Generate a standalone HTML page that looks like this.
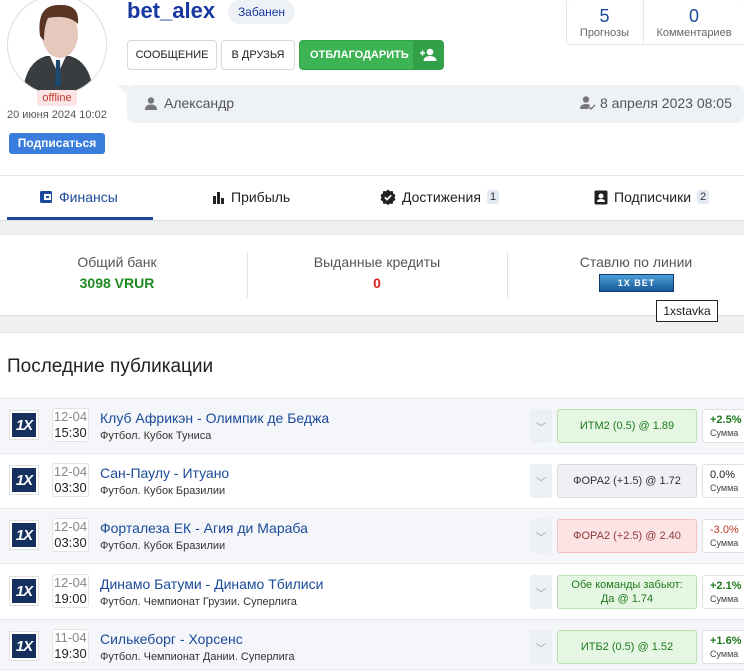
<!DOCTYPE html><html><head><meta charset="utf-8"><style>
*{box-sizing:border-box;margin:0;padding:0}
body{width:744px;height:666px;overflow:hidden;background:#fff;font-family:"Liberation Sans",Arial,sans-serif;position:relative;color:#222}
.a{position:absolute}
.btn{position:absolute;top:40px;height:30px;border:1px solid #d5d8dc;border-radius:4px;font-size:11px;display:flex;align-items:center;justify-content:center;background:#fff;color:#222}
.row{position:absolute;left:0;width:744px;height:55px;border-bottom:1px solid #e3e6ea}
.g{background:#f4f6f9}
.logo{position:absolute;left:9px;top:11px;width:30px;height:30px;border:1px solid #e0e0e0;background:#fff;padding:2px}
.logo div{width:100%;height:100%;background:#15305e;color:#fff;font-weight:bold;font-style:italic;font-size:15px;display:flex;align-items:center;justify-content:center;letter-spacing:-1px}
.dt{position:absolute;left:52px;top:9px;width:37px;height:34px;border:1px solid #e3e3e3;border-radius:3px;background:#fff;font-size:13px;text-align:center;line-height:16px;color:#222}
.dt span{color:#888;display:block}
.tt{position:absolute;left:100px;top:11px;font-size:14px;color:#1b4a9a}
.st{position:absolute;left:100px;top:31px;font-size:11px;color:#333}
.ch{position:absolute;left:530px;top:10px;width:22px;height:34px;background:#eceff3;border-radius:3px;color:#999;font-size:10px;display:flex;align-items:center;justify-content:center}
.bet{position:absolute;left:557px;top:10px;width:140px;height:34px;border:1px solid #ccc;border-radius:3px;font-size:11px;display:flex;align-items:center;justify-content:center;text-align:center;line-height:14px}
.gr{background:#e5f6e2;border-color:#b8e0b0;color:#1f7a1f}
.gy{background:#eef0f3;border-color:#d6d9dd;color:#333}
.rd{background:#fde4e4;border-color:#f3c1c1;color:#8a3b3b}
.pf{position:absolute;left:702px;top:10px;width:50px;height:34px;border:1px solid #e0e0e0;border-radius:3px;background:#fff;font-size:11px;padding:4px 0 0 7px;line-height:13px}
.pf small{font-size:9px;color:#444;display:block}
.tab{position:absolute;top:189px;font-size:14px;color:#222;display:flex;align-items:center;gap:6px}
.cnt{background:#e3e9f3;font-size:11px;padding:1px 3px;border-radius:3px;color:#333}
</style></head><body>
<div class="a" style="left:7px;top:-5px;width:100px;height:100px;border-radius:50%;border:1px solid #ddd;overflow:hidden;background:#fff">
<svg width="100" height="100" viewBox="0 0 100 100"><path d="M15 95 Q18 66 38 60 L62 60 Q82 66 85 95Z" fill="#3a3d3f"/><path d="M42 60 L50 78 L58 60Z" fill="#fff"/><path d="M48 64 L52 64 L53 90 L47 90Z" fill="#1d4a6e"/><ellipse cx="52" cy="38" rx="18" ry="24" fill="#e6c8bd"/><path d="M32 40 Q28 8 52 9 Q72 8 70 28 Q60 18 40 22 Q36 30 36 45Z" fill="#5a3524"/></svg></div>
<div class="a" style="left:37px;top:90px;width:40px;height:16px;background:#fde4e4;border-radius:3px;color:#c0392b;font-size:11px;text-align:center;line-height:16px">offline</div>
<div class="a" style="left:7px;top:109px;font-size:11px;color:#555">20 июня 2024 10:02</div>
<div class="a" style="left:9px;top:133px;width:96px;height:21px;background:#3b7ddd;border-radius:3px;color:#fff;font-size:12px;font-weight:bold;text-align:center;line-height:21px">Подписаться</div>
<div class="a" style="left:127px;top:-2px;font-size:22px;font-weight:bold;color:#1838a0">bet_alex</div>
<div class="a" style="left:228px;top:0;width:67px;height:24px;background:#eef1f5;border-radius:12px;font-size:12px;color:#1838a0;text-align:center;line-height:24px">Забанен</div>
<div class="btn" style="left:127px;width:90px">СООБЩЕНИЕ</div>
<div class="btn" style="left:221px;width:74px">В ДРУЗЬЯ</div>
<div class="btn" style="left:299px;width:145px;background:#3db454;border-color:#34a04a;color:#fff;font-weight:bold;justify-content:flex-start;padding-left:10px;overflow:hidden">ОТБЛАГОДАРИТЬ<div style="position:absolute;right:0;top:0;width:30px;height:100%;background:#31a047;display:flex;align-items:center;justify-content:center"><svg width="18" height="14" viewBox="0 0 18 14"><circle cx="11" cy="4" r="3.3" fill="#fff"/><path d="M4.5 13 Q5 8 11 8 Q17 8 17.5 13Z" fill="#fff"/><path d="M1 5h5M3.5 2.5v5" stroke="#fff" stroke-width="1.6"/></svg></div></div>
<div class="a" style="left:566px;top:-1px;width:180px;height:46px;border:1px solid #e3e6ea;border-radius:4px"></div>
<div class="a" style="left:643px;top:0;width:1px;height:45px;background:#e3e6ea"></div>
<div class="a" style="left:566px;top:5px;width:77px;text-align:center;font-size:18px;color:#1b4a9a;line-height:22px">5<div style="font-size:11px;color:#666;line-height:12px">Прогнозы</div></div>
<div class="a" style="left:644px;top:5px;width:100px;text-align:center;font-size:18px;color:#1b4a9a;line-height:22px">0<div style="font-size:11px;color:#666;line-height:12px">Комментариев</div></div>
<div class="a" style="left:127px;top:85px;width:617px;height:38px;background:#eef1f5;border-radius:8px"></div>
<div class="a" style="left:117px;top:85px;width:0;height:0;border-left:12px solid transparent;border-top:10px solid #eef1f5"></div>
<svg class="a" style="left:144px;top:97px" width="14" height="13" viewBox="0 0 14 13"><circle cx="7" cy="3.5" r="3.2" fill="#777"/><path d="M1 13 Q1 7.5 7 7.5 Q13 7.5 13 13Z" fill="#777"/></svg>
<div class="a" style="left:164px;top:95px;font-size:14px;color:#555">Александр</div>
<svg class="a" style="left:579px;top:96px" width="17" height="14" viewBox="0 0 17 14"><circle cx="7" cy="3.5" r="3.2" fill="#777"/><path d="M1 13 Q1 8 7 8 Q10 8 11 9 L9 13Z" fill="#777"/><path d="M10 11 l2 2 l4 -4" stroke="#777" stroke-width="1.4" fill="none"/></svg>
<div class="a" style="left:600px;top:95px;font-size:14px;color:#555">8 апреля 2023 08:05</div>
<div class="a" style="left:0;top:175px;width:744px;height:1px;background:#e3e6ea"></div>
<div class="tab" style="left:39px;color:#1b4a9a"><svg width="14" height="14" viewBox="0 0 14 14"><rect x="1" y="1" width="12" height="12" rx="1.5" fill="#1b4a9a"/><rect x="5" y="4" width="7" height="6" fill="#fff"/><rect x="7" y="6" width="3" height="2" fill="#1b4a9a"/></svg>Финансы</div>
<div class="a" style="left:7px;top:217px;width:146px;height:3px;background:#1b4a9a"></div>
<div class="tab" style="left:212px"><svg width="13" height="13" viewBox="0 0 13 13"><rect x="1" y="5" width="3" height="8" fill="#222"/><rect x="5" y="1" width="3" height="12" fill="#222"/><rect x="9" y="7" width="3" height="6" fill="#222"/></svg>Прибыль</div>
<div class="tab" style="left:380px"><svg width="16" height="16" viewBox="0 0 16 16"><path d="M8 0.5 L10 2.3 L12.7 2 L13.3 4.6 L15.5 6 L14.5 8.5 L15.5 11 L13.2 12.3 L12.6 15 L10 14.6 L8 16 L6 14.6 L3.4 15 L2.8 12.3 L0.5 11 L1.5 8.5 L0.5 6 L2.7 4.6 L3.3 2 L6 2.3Z" fill="#222"/><path d="M4.8 8.3 l2.2 2.2 l4.2 -4.2" stroke="#fff" stroke-width="1.7" fill="none"/></svg>Достижения <span class="cnt">1</span></div>
<div class="tab" style="left:594px"><svg width="14" height="15" viewBox="0 0 14 15"><rect x="0.5" y="0.5" width="13" height="14" rx="1.5" fill="#222"/><circle cx="7" cy="6" r="2.5" fill="#fff"/><path d="M3 12 Q3 9 7 9 Q11 9 11 12Z" fill="#fff"/></svg>Подписчики <span class="cnt">2</span></div>
<div class="a" style="left:0;top:220px;width:744px;height:15px;background:#f0f0f0;border-top:1px solid #ddd;border-bottom:1px solid #e6e6e6"></div>
<div class="a" style="left:247px;top:252px;width:1px;height:46px;background:#e3e3e3"></div>
<div class="a" style="left:507px;top:252px;width:1px;height:46px;background:#e3e3e3"></div>
<div class="a" style="left:0;top:254px;width:234px;text-align:center;font-size:14px;color:#555">Общий банк<div style="font-size:14px;font-weight:bold;color:#1f8a1f;margin-top:5px">3098 VRUR</div></div>
<div class="a" style="left:248px;top:254px;width:258px;text-align:center;font-size:14px;color:#555">Выданные кредиты<div style="font-size:14px;font-weight:bold;color:#e02020;margin-top:5px">0</div></div>
<div class="a" style="left:508px;top:254px;width:256px;text-align:center;font-size:14px;color:#555">Ставлю по линии</div>
<div class="a" style="left:599px;top:274px;width:75px;height:18px;background:linear-gradient(#4a9ed8,#1a5a9a);border:1px solid #0d3a6a;color:#fff;font-size:9px;font-weight:bold;text-align:center;line-height:16px;letter-spacing:1px">1X BET</div>
<div class="a" style="left:0;top:315px;width:744px;height:18px;background:#f0f0f0;border-top:1px solid #ddd;border-bottom:1px solid #e6e6e6"></div>
<div class="a" style="left:656px;top:300px;width:62px;height:22px;border:1px solid #222;background:#fff;font-size:12px;text-align:center;line-height:20px;color:#222;z-index:5">1xstavka</div>
<div class="a" style="left:7px;top:356px;font-size:19px;color:#222">Последние публикации</div>
<div class="a" style="left:0;top:398px;width:744px;height:1px;background:#e3e6ea"></div>

<div class="row g" style="top:399px"><div class="logo"><div>1X</div></div><div class="dt"><span>12-04</span>15:30</div><div class="tt">Клуб Африкэн - Олимпик де Беджа</div><div class="st">Футбол. Кубок Туниса</div><div class="ch">﹀</div><div class="bet gr">ИТМ2 (0.5) @ 1.89</div><div class="pf"><b style="color:#1f7a1f;font-weight:bold">+2.5%</b><small>Сумма</small></div></div>
<div class="row" style="top:454px"><div class="logo"><div>1X</div></div><div class="dt"><span>12-04</span>03:30</div><div class="tt">Сан-Паулу - Итуано</div><div class="st">Футбол. Кубок Бразилии</div><div class="ch">﹀</div><div class="bet gy">ФОРА2 (+1.5) @ 1.72</div><div class="pf">0.0%<small>Сумма</small></div></div>
<div class="row g" style="top:509px"><div class="logo"><div>1X</div></div><div class="dt"><span>12-04</span>03:30</div><div class="tt">Форталеза ЕК - Агия ди Мараба</div><div class="st">Футбол. Кубок Бразилии</div><div class="ch">﹀</div><div class="bet rd">ФОРА2 (+2.5) @ 2.40</div><div class="pf"><span style="color:#c0392b">-3.0%</span><small>Сумма</small></div></div>
<div class="row" style="top:565px"><div class="logo"><div>1X</div></div><div class="dt"><span>12-04</span>19:00</div><div class="tt">Динамо Батуми - Динамо Тбилиси</div><div class="st">Футбол. Чемпионат Грузии. Суперлига</div><div class="ch">﹀</div><div class="bet gr">Обе команды забьют:<br>Да @ 1.74</div><div class="pf"><b style="color:#1f7a1f">+2.1%</b><small>Сумма</small></div></div>
<div class="row g" style="top:620px;height:50px"><div class="logo"><div>1X</div></div><div class="dt"><span>11-04</span>19:30</div><div class="tt">Силькеборг - Хорсенс</div><div class="st">Футбол. Чемпионат Дании. Суперлига</div><div class="ch">﹀</div><div class="bet gr">ИТБ2 (0.5) @ 1.52</div><div class="pf"><b style="color:#1f7a1f">+1.6%</b><small>Сумма</small></div></div>
</body></html>
